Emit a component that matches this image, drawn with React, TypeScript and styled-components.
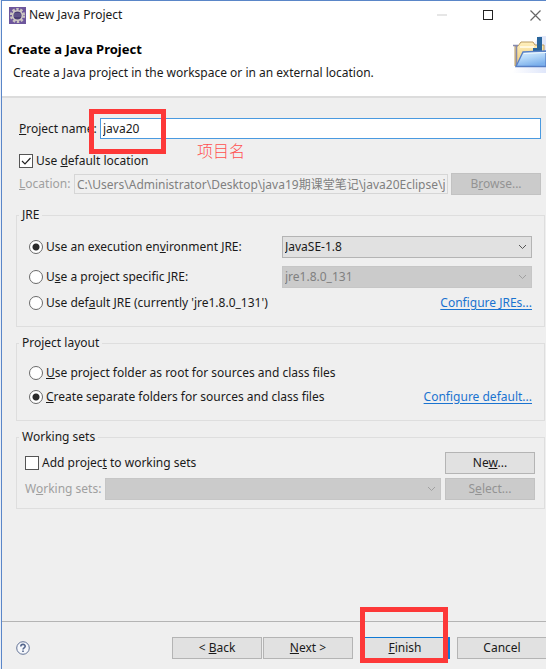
import React from "react";
import styled, { createGlobalStyle, css } from "styled-components";

const GlobalStyle = createGlobalStyle`
  * { box-sizing: border-box; }
  html, body { margin: 0; height: 100%; overflow: hidden; }
  body {
    background: #e9eef7;
    color: #1a1a1a;
    font: 12px/18px "Noto Sans", "Noto Sans CJK SC", sans-serif;
  }
  #root { height: 100%; }
  button, input, select { font: inherit; color: inherit; margin: 0; }
`;

const Dialog = styled.main`
  display: flex;
  flex-direction: column;
  min-height: 100vh;
  margin-left: 1px;
  border-top: 1px solid #5a86c8;
  border-left: 1px solid #5a86c8;
  background: #efefef;
  overflow: hidden;
`;

const TitleBar = styled.header`
  display: flex;
  align-items: center;
  height: 28px;
  padding-left: 7px;
  background: #fff;
`;

const WindowTitle = styled.span`
  flex: 1;
  padding-left: 3px;
`;

const WindowButton = styled.button<{ $edge?: boolean }>`
  display: flex;
  align-items: center;
  justify-content: ${(p) => (p.$edge ? "flex-end" : "center")};
  width: ${(p) => (p.$edge ? 35 : 46)}px;
  height: 28px;
  padding: 0 ${(p) => (p.$edge ? 5 : 0)}px 0 0;
  border: 0;
  background: none;
  color: ${(p) => (p.$edge ? "#666" : "#222")};

  &:disabled { color: #e6e6e6; }
`;

const Banner = styled.section`
  display: flex;
  justify-content: space-between;
  height: 69px;
  background: #fff;
  border-bottom: 2px solid #dcdcdc;
`;

const BannerText = styled.div`
  padding: 10px 0 0 6px;
`;

const Heading = styled.h1`
  margin: 0;
  font-size: 13px;
  line-height: 20px;
  color: #000;
`;

const Description = styled.p`
  margin: 4px 0 0;
  padding-left: 5px;
  line-height: 20px;
  white-space: nowrap;
`;

const BannerArt = styled.svg`
  flex: none;
  width: 36px;
  height: 42px;
  margin-top: 5px;
`;

const Fields = styled.form`
  flex: 1;
  padding: 20px 1px 0 14px;
`;

const FieldRow = styled.div<{ $label: number; $gap?: number }>`
  position: relative;
  display: grid;
  grid-template-columns: ${(p) => p.$label}px minmax(0, 1fr) auto;
  align-items: center;
  column-gap: 3px;
  margin-top: ${(p) => p.$gap ?? 0}px;
  padding: 0 4px 0 3px;
`;

const FieldLabel = styled.label<{ $disabled?: boolean }>`
  white-space: nowrap;
  color: ${(p) => (p.$disabled ? "#a0a0a0" : "inherit")};
`;

const NameInput = styled.input`
  grid-column: 2 / 4;
  width: 100%;
  height: 21px;
  padding: 0 2px;
  border: 1px solid #4a9ae0;
  background: #fff;
  outline: none;
`;

const LocationInput = styled.input`
  width: 100%;
  height: 20px;
  padding: 0 2px;
  border: 1px solid #d6d6d6;
  background: #efefef;

  &:disabled { color: #808080; }
`;

const Button = styled.button<{ $primary?: boolean }>`
  width: 90px;
  height: 22px;
  padding: 0;
  border: 1px solid #b4b4b4;
  background: #e1e1e1;
  line-height: 18px;
  white-space: nowrap;

  ${(p) => p.$primary && css`border-color: #1079d4; box-shadow: inset -1px 0 #1079d4;`}

  &:disabled {
    border-color: #c2c2c2;
    background: #cbcbcb;
    color: #939393;
  }
`;

const Choice = styled.label`
  display: flex;
  align-items: center;
  gap: 3px;
  white-space: nowrap;
`;

const Radio = styled.input.attrs({ type: "radio" })`
  appearance: none;
  flex: none;
  width: 14px;
  height: 14px;
  border: 1px solid #6a6a6a;
  border-radius: 50%;
  background: #fff;

  &:checked { background: radial-gradient(circle, #2a2a2a 3px, #fff 4px); }
`;

const CheckFrame = styled.span`
  display: grid;
  flex: none;
  width: 14px;
  height: 14px;

  > * { grid-area: 1 / 1; }
  svg { pointer-events: none; }
`;

const CheckInput = styled.input.attrs({ type: "checkbox" })`
  appearance: none;
  width: 14px;
  height: 14px;
  border: 1px solid #555;
  background: #fff;

  & + svg { visibility: hidden; }
  &:checked + svg { visibility: visible; }
`;

const LocationToggle = styled.div`
  display: flex;
  margin-top: 13px;
  padding-left: 3px;
`;

const Group = styled.fieldset<{ $gap: number }>`
  min-width: 0;
  margin: ${(p) => p.$gap}px 0 0;
  padding: 0;
  border: 1px solid #dedede;
`;

const GroupBody = styled.div<{ $pad: string }>`
  padding: ${(p) => p.$pad};
`;

const Legend = styled.legend`
  margin-left: 2px;
  padding: 0 3px;
  line-height: 18px;
`;

const GroupRow = styled.div<{ $height: number }>`
  display: flex;
  align-items: center;
  justify-content: space-between;
  height: ${(p) => p.$height}px;
`;

const ComboFrame = styled.span<{ $width?: string }>`
  display: grid;
  align-items: center;
  flex: ${(p) => (p.$width ? "none" : "1")};
  width: ${(p) => p.$width ?? "auto"};

  > * { grid-area: 1 / 1; }
  svg { justify-self: end; margin-right: 5px; pointer-events: none; color: #555; }
  select:disabled + svg { color: #a0a0a0; }
`;

const Combo = styled.select`
  appearance: none;
  width: 100%;
  height: 22px;
  padding: 0 20px 0 2px;
  border: 1px solid #b4b4b4;
  border-radius: 0;
  background: #e1e1e1;

  &:disabled {
    border-color: #c6c6c6;
    background: #cbcbcb;
    color: #808080;
    opacity: 1;
  }
`;

const SettingsLink = styled.a`
  color: #1a73d0;
  text-underline-offset: 2px;
`;

const WorkingRow = styled.div<{ $top?: number }>`
  display: flex;
  align-items: center;
  justify-content: space-between;
  gap: 4px;
  margin-top: ${(p) => p.$top ?? 0}px;
`;

const Footer = styled.footer`
  display: flex;
  align-items: center;
  height: 48px;
  padding: 4px 0 0 14px;
  border-top: 1px solid #b4b4b4;
`;

const HelpButton = styled.button`
  display: flex;
  padding: 0;
  border: 0;
  background: none;
  margin-right: auto;
`;

const Actions = styled.div`
  display: flex;
  gap: 7px;
  flex: none;
  margin-right: -1px;
`;

const PagerButtons = styled.div`
  display: flex;
  gap: 1px;
`;

const FinishFrame = styled.span`
  position: relative;
  display: flex;
`;

const Highlight = styled.span<{ $box: string }>`
  position: absolute;
  inset: ${(p) => p.$box};
  border: 5px solid #fd3838;
  pointer-events: none;
`;

const NameHighlight = styled(Highlight)`
  right: auto;
  width: 77px;
`;

const Annotation = styled.span`
  position: absolute;
  left: 181px;
  top: 21px;
  font: 300 16px/22px "Noto Sans CJK SC", sans-serif;
  color: #ff5050;
`;

const CheckMark = () => (
  <svg width="14" height="14" viewBox="0 0 14 14" fill="none" stroke="#222" strokeWidth="1.2">
    <path d="M3 7l3 3 5.5-6" />
  </svg>
);

const Chevron = () => (
  <svg width="9" height="6" viewBox="0 0 9 6" fill="none" stroke="currentColor">
    <path d="M1 1l3.5 3.5L8 1" />
  </svg>
);

const AppIcon = () => (
  <svg width="17" height="17" viewBox="0 0 17 17">
    <rect width="17" height="17" fill="#6d569c" />
    <circle cx="8.500" cy="8.500" r="6.300" fill="none" stroke="#c9c3c0" strokeWidth="2.600" strokeDasharray="2.400 1.560" />
    <circle cx="8.500" cy="8.500" r="4.800" fill="#493b73" stroke="#d2cdc6" strokeWidth="1.500" />
    <path d="M5 7h7M5 9h7" stroke="#75689c" />
  </svg>
);

const FolderArt = () => (
  <BannerArt viewBox="0 0 36 42" aria-hidden="true">
    <defs>
      <linearGradient id="glow" x1="0" y1="0" x2="1" y2="0">
        <stop offset="0" stopColor="#fff" />
        <stop offset="1" stopColor="#dfe6fa" />
      </linearGradient>
      <linearGradient id="front" x1="0" y1="0" x2="0.400" y2="1">
        <stop offset="0" stopColor="#e2f2ff" />
        <stop offset="0.500" stopColor="#b5d8f8" />
        <stop offset="1" stopColor="#7cb0ec" />
      </linearGradient>
      <linearGradient id="back" x1="0" y1="0" x2="0" y2="1">
        <stop offset="0" stopColor="#fff0bd" />
        <stop offset="1" stopColor="#edc873" />
      </linearGradient>
    </defs>
    <path d="M2 39Q16 24 29 2h7v37z" fill="url(#glow)" />
    <path d="M5 32V12h3l3-4h12l2 3h9v21z" fill="url(#back)" stroke="#b99a60" />
    <path d="M3 11.500h5M6.500 12v20" stroke="#8589ad" strokeWidth="1.500" />
    <path d="M10 13h14" stroke="#fff8df" strokeWidth="2" />
    <path d="M27 3h5v15h-9v-4h4z" fill="#28659b" />
    <path d="M6 32.500L13 18l23-1v15.500z" fill="url(#front)" stroke="#577fc5" strokeWidth="1.300" />
    <path d="M14 19.500l22-1" stroke="#f0f9ff" />
  </BannerArt>
);

export default function App() {
  return (
    <>
      <GlobalStyle />
      <Dialog>
        <TitleBar>
          <AppIcon />
          <WindowTitle>New Java Project</WindowTitle>
          <WindowButton aria-label="Minimize" disabled>
            <svg width="10" height="2"><path d="M0 1h10" stroke="currentColor" strokeWidth="2" /></svg>
          </WindowButton>
          <WindowButton aria-label="Maximize">
            <svg width="10" height="10" fill="none" stroke="currentColor"><rect x="0.500" y="0.500" width="9" height="9" /></svg>
          </WindowButton>
          <WindowButton aria-label="Close" $edge>
            <svg width="11" height="11" fill="none" stroke="currentColor" strokeWidth="1.200"><path d="M.5.5l10 10M10.500.5l-10 10" /></svg>
          </WindowButton>
        </TitleBar>
        <Banner>
          <BannerText>
            <Heading>Create a Java Project</Heading>
            <Description>Create a Java project in the workspace or in an external location.</Description>
          </BannerText>
          <FolderArt />
        </Banner>

        <Fields onSubmit={(e) => e.preventDefault()}>
          <FieldRow $label={78}>
            <FieldLabel htmlFor="name"><u>P</u>roject name:</FieldLabel>
            <NameInput id="name" defaultValue="java20" spellCheck={false} />
            <NameHighlight $box="-9px auto -15px 73px" />
            <Annotation>项目名</Annotation>
          </FieldRow>
          <LocationToggle>
            <Choice>
              <CheckFrame><CheckInput defaultChecked /><CheckMark /></CheckFrame>
              <span>Use <u>d</u>efault location</span>
            </Choice>
          </LocationToggle>
          <FieldRow $label={52} $gap={3}>
            <FieldLabel htmlFor="location" $disabled><u>L</u>ocation:</FieldLabel>
            <LocationInput id="location" disabled defaultValue={"C:\\Users\\Administrator\\Desktop\\java19期课堂笔记\\java20Eclipse\\java20"} />
            <Button type="button" disabled>B<u>r</u>owse...</Button>
          </FieldRow>

          <Group $gap={11}>
            <Legend>JRE</Legend>
            <GroupBody $pad="8px 12px 11px">
              <GroupRow $height={30}>
                <Choice><Radio name="jre" defaultChecked /><span>Use an execution en<u>v</u>ironment JRE:</span></Choice>
                <ComboFrame $width="250px">
                  <Combo aria-label="Execution environment"><option>JavaSE-1.8</option></Combo><Chevron />
                </ComboFrame>
              </GroupRow>
              <GroupRow $height={29}>
                <Choice><Radio name="jre" /><span>U<u>s</u>e a project specific JRE:</span></Choice>
                <ComboFrame $width="250px">
                  <Combo aria-label="Project specific JRE" disabled><option>jre1.8.0_131</option></Combo><Chevron />
                </ComboFrame>
              </GroupRow>
              <GroupRow $height={24}>
                <Choice><Radio name="jre" /><span>Use def<u>a</u>ult JRE (currently 'jre1.8.0_131')</span></Choice>
                <SettingsLink href="#jres">Configure JREs...</SettingsLink>
              </GroupRow>
            </GroupBody>
          </Group>

          <Group $gap={7}>
            <Legend>Project layout</Legend>
            <GroupBody $pad="9px 12px 11px">
              <GroupRow $height={24}>
                <Choice><Radio name="layout" /><span><u>U</u>se project folder as root for sources and class files</span></Choice>
              </GroupRow>
              <GroupRow $height={24}>
                <Choice><Radio name="layout" defaultChecked /><span><u>C</u>reate separate folders for sources and class files</span></Choice>
                <SettingsLink href="#layout">Configure default...</SettingsLink>
              </GroupRow>
            </GroupBody>
          </Group>

          <Group $gap={7}>
            <Legend>Working sets</Legend>
            <GroupBody $pad="6px 9px 8px 8px">
              <WorkingRow>
                <Choice>
                  <CheckFrame><CheckInput /><CheckMark /></CheckFrame>
                  <span>Add projec<u>t</u> to working sets</span>
                </Choice>
                <Button type="button">Ne<u>w</u>...</Button>
              </WorkingRow>
              <WorkingRow $top={4}>
                <FieldLabel htmlFor="sets" $disabled>W<u>o</u>rking sets:</FieldLabel>
                <ComboFrame><Combo id="sets" disabled /><Chevron /></ComboFrame>
                <Button type="button" disabled>S<u>e</u>lect...</Button>
              </WorkingRow>
            </GroupBody>
          </Group>
        </Fields>

        <Footer>
          <HelpButton type="button" aria-label="Help">
            <svg width="14" height="14" viewBox="0 0 14 14" fill="none" stroke="#53658c">
              <circle cx="7" cy="7" r="6.300" fill="#f5f7fb" strokeWidth="0.900" />
              <path d="M4.800 5.500C4.800 2.700 9.200 2.700 9.200 5.300 9.200 6.800 7 6.900 7 8.600M7 9.500v1.600" strokeWidth="1.600" />
            </svg>
          </HelpButton>
          <Actions>
            <PagerButtons>
              <Button type="button">&lt; <u>B</u>ack</Button>
              <Button type="button"><u>N</u>ext &gt;</Button>
            </PagerButtons>
            <FinishFrame>
              <Button type="submit" $primary><u>F</u>inish</Button>
              <Highlight $box="-30px 2px -4px 0" />
            </FinishFrame>
            <Button type="button">Cancel</Button>
          </Actions>
        </Footer>
      </Dialog>
    </>
  );
}
